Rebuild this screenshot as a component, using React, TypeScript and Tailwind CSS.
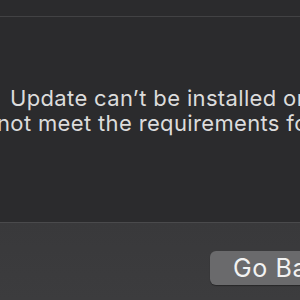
export default function App() {
  return (
    <div
      className="w-[300px] h-[300px] overflow-hidden bg-[#2b2b2d] flex flex-col"
      style={{ fontFamily: "Inter, 'Noto Sans', sans-serif" }}
    >
      <div className="h-[16px] shrink-0 bg-[#2b2b2d]" />
      <div className="h-px shrink-0 bg-[#424244]" />
      <div className="flex-1 pt-[69px] text-[22px] leading-[25px] tracking-[0.35px] text-[#dcdcdc] whitespace-nowrap">
        <div className="pl-[10px]">Update can’t be installed on this computer</div>
        <div className="-ml-[3px]">not meet the requirements for this update.</div>
      </div>
      <div className="h-[78px] shrink-0 border-t border-[#4a4a4c] bg-gradient-to-b from-[#39393b] to-[#3c3c3e] pt-[28px] pl-[210px]">
        <button className="h-[34px] w-[130px] rounded-[6px] bg-[#6a6a6c] shadow-[0_1px_1px_rgba(0,0,0,0.35)] pl-[23px] text-left text-[25px] tracking-[0.6px] leading-[34px] text-[#f2f2f2] whitespace-nowrap">
          Go Back
        </button>
      </div>
    </div>
  );
}
